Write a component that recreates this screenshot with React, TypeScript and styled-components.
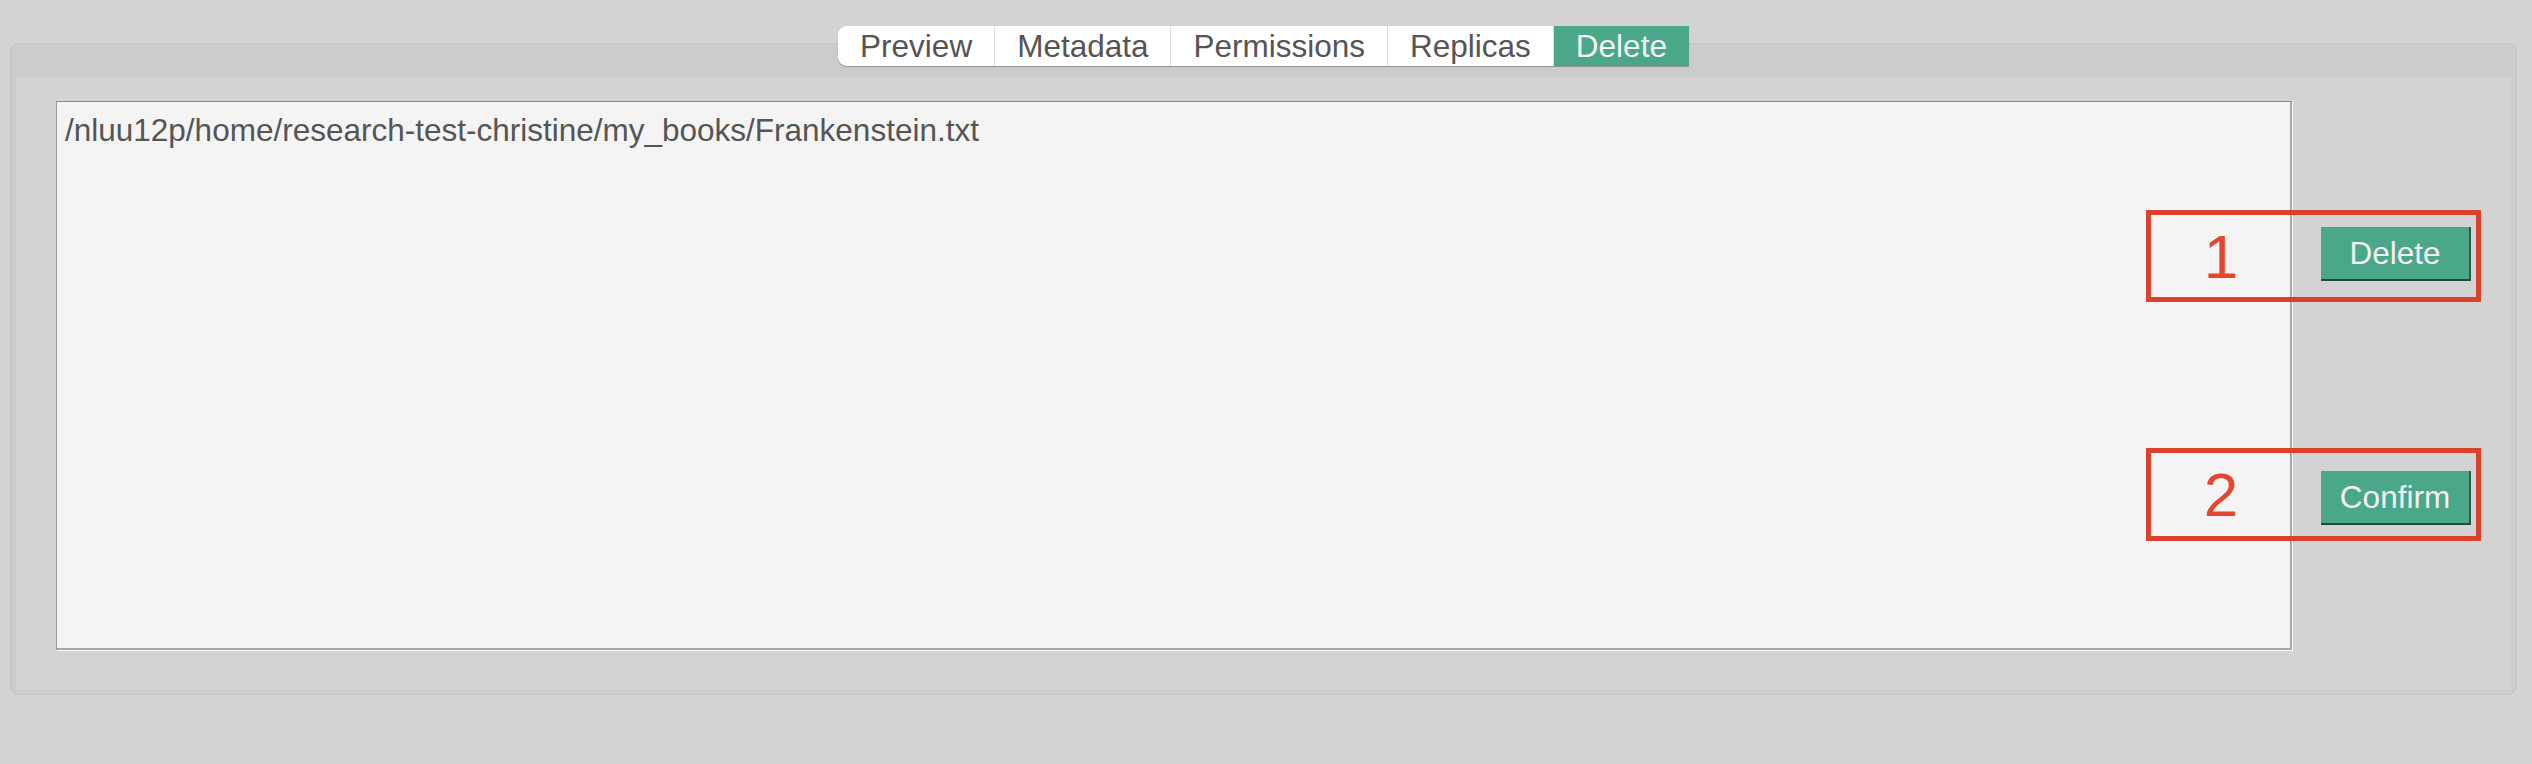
import React from 'react';
import styled, { createGlobalStyle } from 'styled-components';

const GlobalStyle = createGlobalStyle`
  html, body {
    margin: 0;
    background: #d3d3d3;
    font-family: 'Liberation Sans', Arial, sans-serif;
  }
`;

const Page = styled.div`
  padding: 26px 15px 0 10px;
  min-height: 764px;
  box-sizing: border-box;
`;

const TabRow = styled.div`
  display: flex;
  justify-content: center;
  position: relative;
  z-index: 1;
  margin-bottom: -23px;
`;

const TabBar = styled.div`
  display: flex;
  border-radius: 9px 0 0 9px;
  overflow: hidden;
  box-shadow: 0 1px 1px rgba(0, 0, 0, 0.3);
`;

const Tab = styled.div<{ $active?: boolean }>`
  height: 40px;
  padding: 0 22px;
  display: flex;
  align-items: center;
  font-size: 31.5px;
  color: ${p => (p.$active ? '#f4f4f4' : '#555')};
  background: ${p => (p.$active ? '#4aa789' : '#fff')};
  & + & {
    border-left: 1px solid #dcdcdc;
  }
`;

const Panel = styled.div`
  background: #cccccc;
  border: 1px solid #c4c4c4;
  border-radius: 9px;
  padding: 33px 5px 4px;
`;

const Body = styled.div`
  display: flex;
  gap: 29px;
  padding: 24px 40px 40px;
  background: #d3d3d3;
`;

const PathBox = styled.div`
  flex: 1;
  height: 549px;
  box-sizing: border-box;
  background: #f4f4f4;
  border-top: 1px solid #8c8c8c;
  border-left: 1px solid #9a9a9a;
  border-right: 2px solid #a8a8a8;
  border-bottom: 2px solid #a8a8a8;
  box-shadow: 1px 1px 0 #fafafa;
  padding: 10px 8px;
  font-size: 31.5px;
  color: #555;
`;

const Actions = styled.div`
  width: 150px;
  display: flex;
  flex-direction: column;
  gap: 190px;
  padding-top: 126px;
`;

const Slot = styled.div`
  position: relative;
`;

const ActionButton = styled.button`
  width: 150px;
  height: 54px;
  background: #4aa789;
  color: #f2f2f2;
  font-family: 'Liberation Sans', Arial, sans-serif;
  font-size: 31.5px;
  border: none;
  border-right: 2px solid #2c5a4a;
  border-bottom: 2px solid #244a3d;
  padding: 0;
  cursor: pointer;
`;

const Annotation = styled.div<{ $top: number; $bottom: number }>`
  position: absolute;
  left: -175px;
  right: -10px;
  top: ${p => p.$top}px;
  bottom: ${p => p.$bottom}px;
  border: 5px solid #d8412a;
  pointer-events: none;
  display: flex;
  align-items: center;
`;

const Step = styled.span`
  width: 140px;
  text-align: center;
  font-size: 62px;
  color: #e5462c;
`;

const tabs = ['Preview', 'Metadata', 'Permissions', 'Replicas', 'Delete'];

const App: React.FC = () => {
  return (
    <Page>
      <GlobalStyle />
      <TabRow>
        <TabBar>
          {tabs.map(t => (
            <Tab key={t} $active={t === 'Delete'}>{t}</Tab>
          ))}
        </TabBar>
      </TabRow>
      <Panel>
        <Body>
          <PathBox>/nluu12p/home/research-test-christine/my_books/Frankenstein.txt</PathBox>
          <Actions>
            <Slot>
              <ActionButton>Delete</ActionButton>
              <Annotation $top={-17} $bottom={-21}>
                <Step>1</Step>
              </Annotation>
            </Slot>
            <Slot>
              <ActionButton>Confirm</ActionButton>
              <Annotation $top={-23} $bottom={-16}>
                <Step>2</Step>
              </Annotation>
            </Slot>
          </Actions>
        </Body>
      </Panel>
    </Page>
  );
};

export default App;
